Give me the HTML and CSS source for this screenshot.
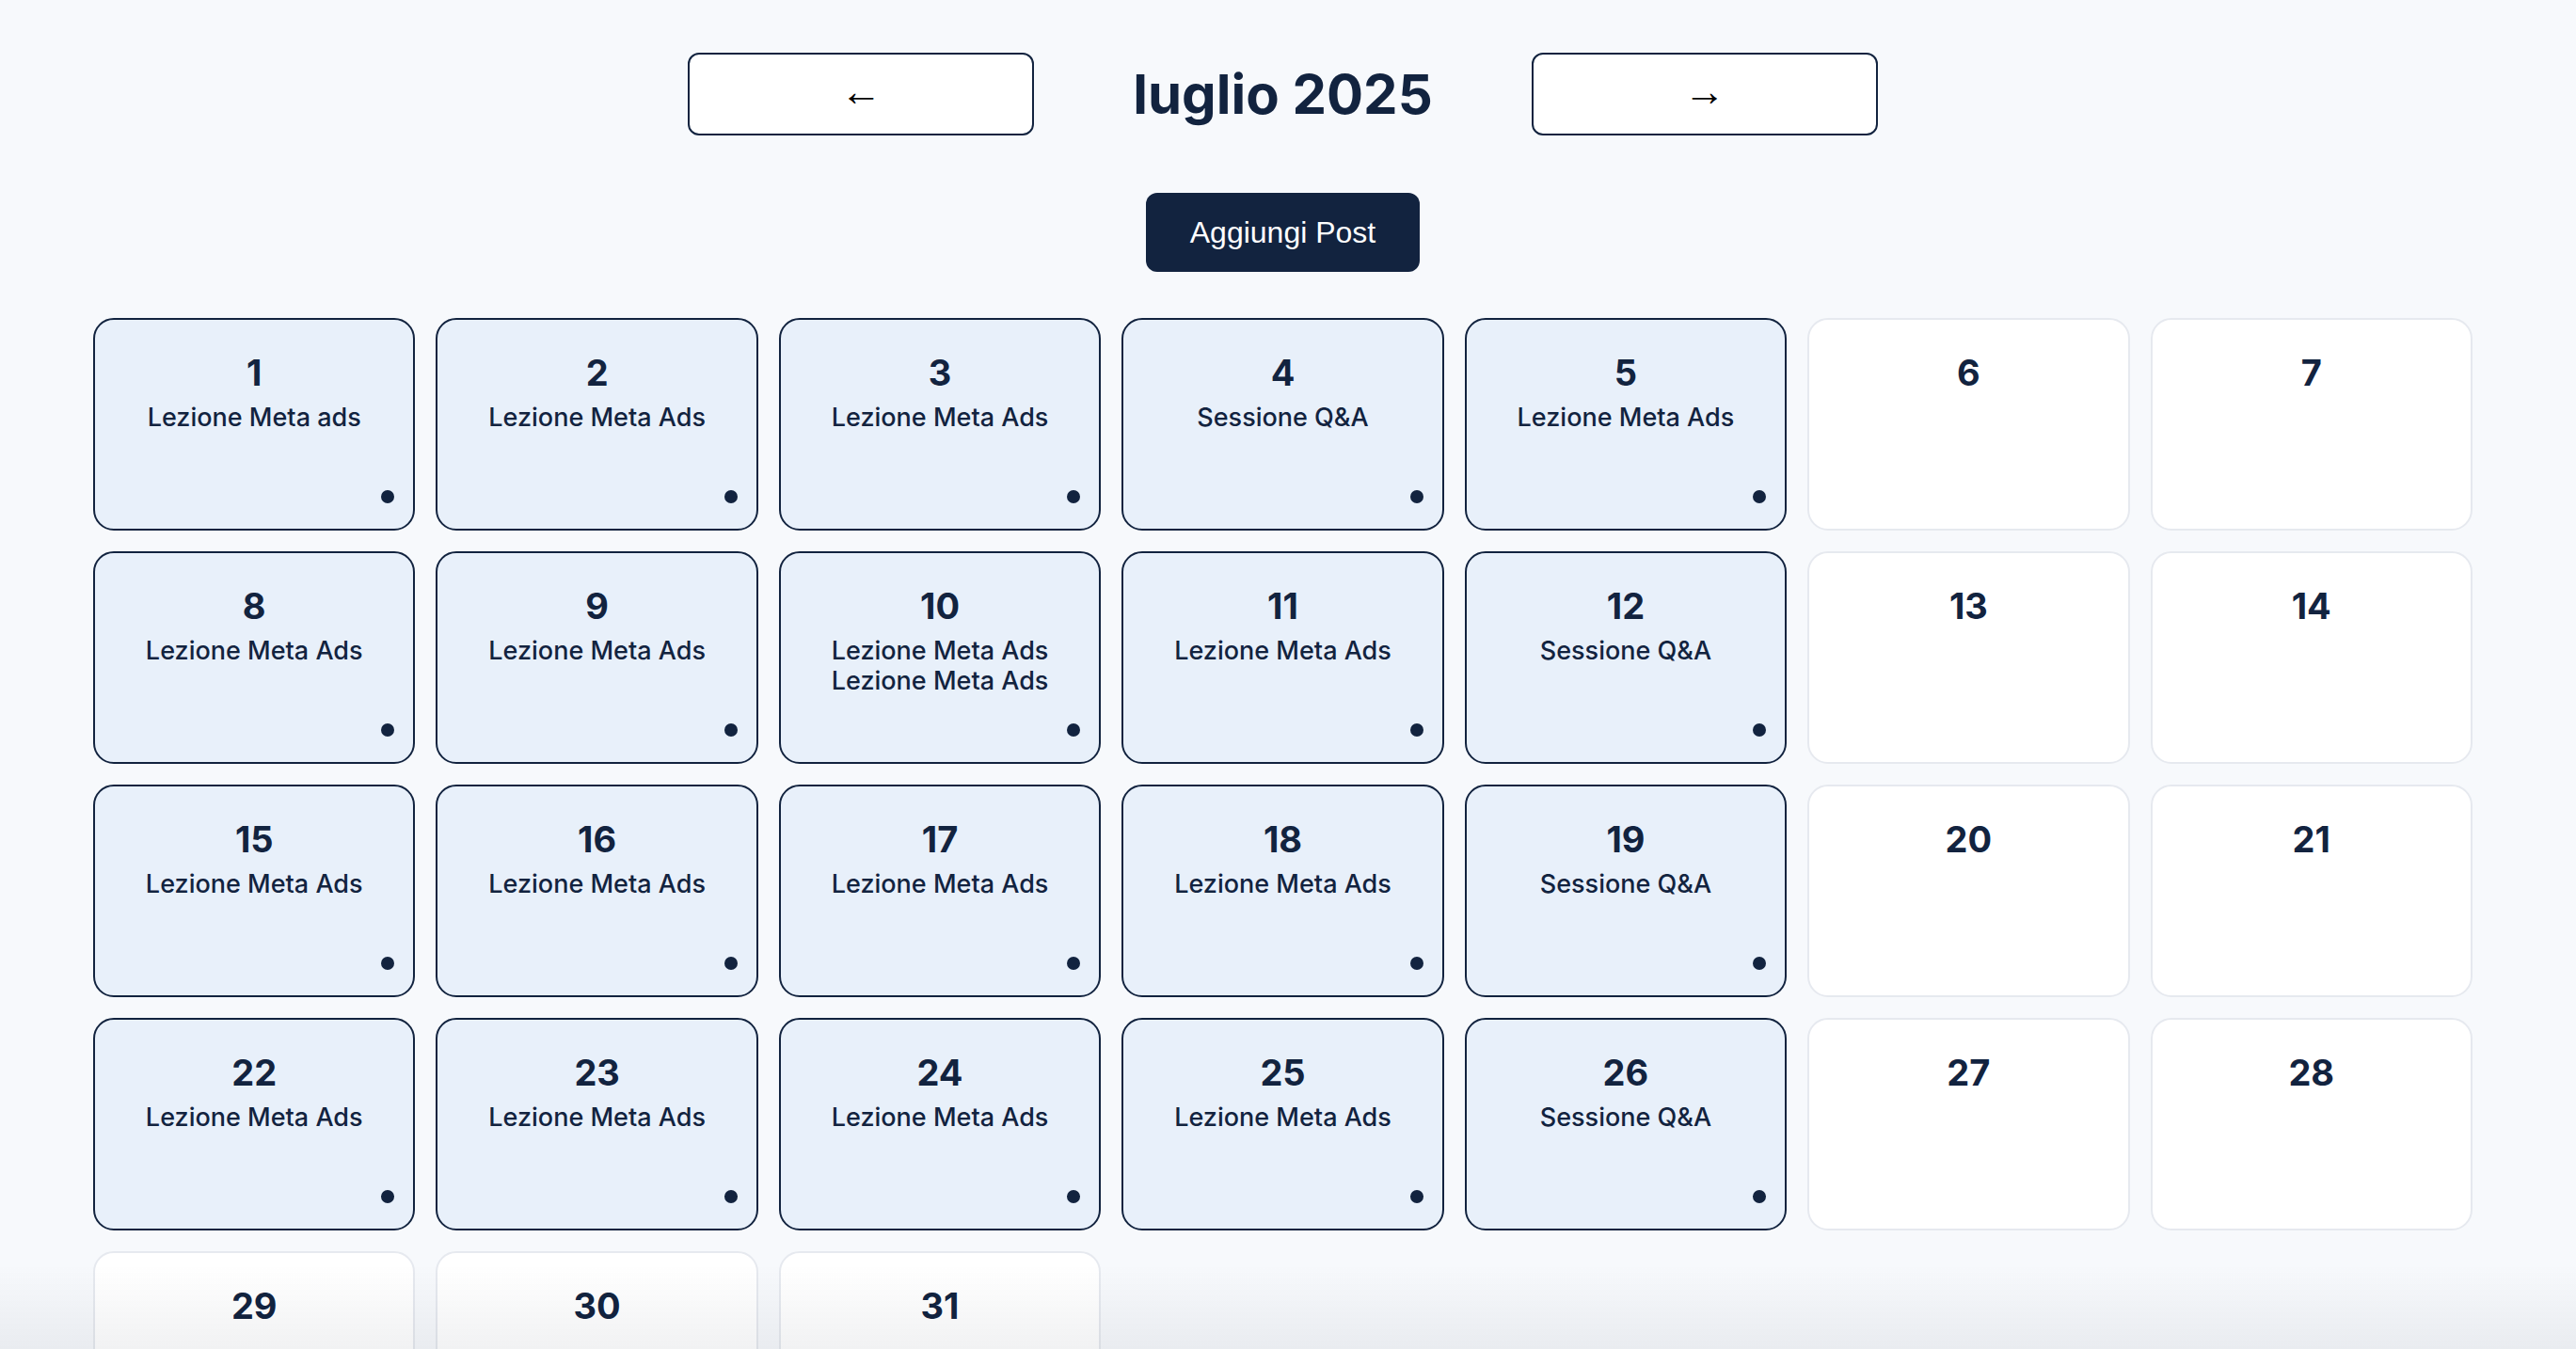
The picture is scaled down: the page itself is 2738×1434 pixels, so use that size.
FILE: index.html
```html
<!DOCTYPE html>
<html lang="it">
<head>
  <meta charset="UTF-8" />
  <meta name="viewport" content="width=device-width, initial-scale=1" />
  <title>Calendario Post</title>
  <link rel="stylesheet" href="styles.css">
</head>
<body>
  <div class="page">
    <div class="month-nav">
      <button class="nav-btn" id="prevMonth">&larr;</button>
      <h1 id="monthTitle">luglio 2025</h1>
      <button class="nav-btn" id="nextMonth">&rarr;</button>
    </div>

    <div class="actions">
      <button class="add-btn" id="addPost">Aggiungi Post</button>
    </div>

    <div class="calendar" id="calendar"></div>
  </div>

  <div class="bottom-fade"></div>

  <script src="app.js"></script>
</body>
</html>
```

FILE: app.js
```js
const calendar = document.getElementById('calendar');

// Post salvati per giorno del mese (luglio 2025)
const posts = {
  1: ['Lezione Meta ads'],
  2: ['Lezione Meta Ads'],
  3: ['Lezione Meta Ads'],
  4: ['Sessione Q&A'],
  5: ['Lezione Meta Ads'],
  8: ['Lezione Meta Ads'],
  9: ['Lezione Meta Ads'],
  10: ['Lezione Meta Ads', 'Lezione Meta Ads'],
  11: ['Lezione Meta Ads'],
  12: ['Sessione Q&A'],
  15: ['Lezione Meta Ads'],
  16: ['Lezione Meta Ads'],
  17: ['Lezione Meta Ads'],
  18: ['Lezione Meta Ads'],
  19: ['Sessione Q&A'],
  22: ['Lezione Meta Ads'],
  23: ['Lezione Meta Ads'],
  24: ['Lezione Meta Ads'],
  25: ['Lezione Meta Ads'],
  26: ['Sessione Q&A']
};

function renderCalendar() {
  calendar.innerHTML = '';
  for (let day = 1; day <= 31; day++) {
    const cell = document.createElement('div');
    cell.className = 'day';

    const num = document.createElement('div');
    num.className = 'day-number';
    num.textContent = day;
    cell.appendChild(num);

    const items = posts[day] || [];
    if (items.length) {
      cell.classList.add('has-post');
      const list = document.createElement('div');
      list.className = 'day-posts';
      items.forEach(title => {
        const p = document.createElement('div');
        p.textContent = title;
        list.appendChild(p);
      });
      cell.appendChild(list);

      const dot = document.createElement('span');
      dot.className = 'dot';
      cell.appendChild(dot);
    }

    calendar.appendChild(cell);
  }
}

renderCalendar();
```

FILE: styles.css
```css
body {
  margin: 0;
  background: #f7f9fc;
  font-family: Inter, "Noto Sans", sans-serif;
  color: #12233f;
}
.page {
  padding: 56px 110px 0 99px;
}
.month-nav {
  display: flex;
  justify-content: center;
  align-items: center;
  gap: 105px;
}
.month-nav h1 {
  margin: 0;
  font-size: 58px;
  font-weight: 700;
}
.nav-btn {
  width: 368px;
  height: 88px;
  padding: 0 0 6px;
  background: #fff;
  border: 2px solid #12233f;
  border-radius: 12px;
  font-family: "Liberation Sans", Arial, sans-serif;
  font-size: 44px;
  color: #000;
  cursor: pointer;
}
.actions {
  display: flex;
  justify-content: center;
  margin-top: 61px;
}
.add-btn {
  background: #12233f;
  color: #fff;
  border: none;
  border-radius: 12px;
  padding: 23px 47px;
  line-height: 38px;
  font-family: "Liberation Sans", Arial, sans-serif;
  font-size: 32px;
  cursor: pointer;
}
.calendar {
  display: grid;
  grid-template-columns: repeat(7, 1fr);
  gap: 22px;
  margin-top: 49px;
}
.day {
  position: relative;
  box-sizing: border-box;
  height: 226px;
  padding-top: 33px;
  background: #fff;
  border: 2px solid #e6e9ef;
  border-radius: 22px;
  text-align: center;
}
.day.has-post {
  background: #e8f0fa;
  border-color: #12233f;
}
.day-number {
  font-size: 38px;
  font-weight: 700;
}
.day-posts {
  margin-top: 9px;
  font-size: 27px;
  font-weight: 500;
  line-height: 32px;
}
.dot {
  position: absolute;
  right: 20px;
  bottom: 27px;
  width: 14px;
  height: 14px;
  border-radius: 50%;
  background: #12233f;
}
.bottom-fade {
  position: fixed;
  left: 0;
  right: 0;
  bottom: 0;
  height: 90px;
  background: linear-gradient(to bottom, rgba(20, 30, 50, 0), rgba(20, 30, 50, 0.06));
  pointer-events: none;
}
```
